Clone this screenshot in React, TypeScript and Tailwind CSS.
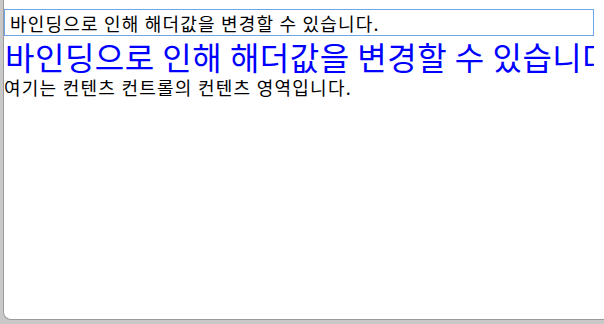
export default function App() {
  return (
    <div className="w-[604px] h-[324px] bg-[#c8c8c8] overflow-hidden">
      <div className="ml-[3px] h-[320px] bg-white border-l border-b border-[#9a9a9a] rounded-bl-[8px] overflow-hidden flex flex-col" style={{ fontFamily: '"Noto Sans CJK KR", "Noto Sans", sans-serif' }}>
        <div className="w-[590px] mt-[9px] h-[27px] border border-[#6aa6e8] flex items-center pl-[5px] text-[18px] tracking-[1.2px] text-black leading-none whitespace-nowrap overflow-hidden">
          바인딩으로 인해 해더값을 변경할 수 있습니다.
        </div>
        <div className="w-[590px] overflow-hidden whitespace-nowrap text-[32px] tracking-[0.5px] leading-[36px] mt-[2px] text-[#0000ff] pl-[1px]">
          바인딩으로 인해 해더값을 변경할 수 있습니다.
        </div>
        <div className="text-[18px] tracking-[1.25px] leading-[22px] mt-[2px] text-black whitespace-nowrap">
          여기는 컨텐츠 컨트롤의 컨텐츠 영역입니다.
        </div>
      </div>
    </div>
  );
}
